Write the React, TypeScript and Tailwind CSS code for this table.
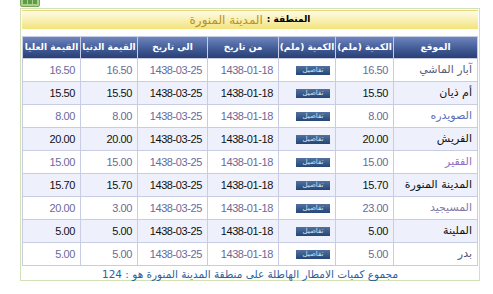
import React from "react";

interface RainRow {
  site: string;
  amount: string;
  from: string;
  to: string;
  min: string;
  max: string;
  siteColor: string;
}

const ROWS: RainRow[] = [
  { site: "آبار الماشي", amount: "16.50", from: "1438-01-18", to: "1438-03-25", min: "16.50", max: "16.50", siteColor: "text-[#5a5a7a]" },
  { site: "أم ذيان", amount: "15.50", from: "1438-01-18", to: "1438-03-25", min: "15.50", max: "15.50", siteColor: "text-[#111111]" },
  { site: "الصويدره", amount: "8.00", from: "1438-01-18", to: "1438-03-25", min: "8.00", max: "8.00", siteColor: "text-[#5b6fb5]" },
  { site: "الفريش", amount: "20.00", from: "1438-01-18", to: "1438-03-25", min: "20.00", max: "20.00", siteColor: "text-[#111111]" },
  { site: "الفقير", amount: "15.00", from: "1438-01-18", to: "1438-03-25", min: "15.00", max: "15.00", siteColor: "text-[#8f6fc0]" },
  { site: "المدينة المنورة", amount: "15.70", from: "1438-01-18", to: "1438-03-25", min: "15.70", max: "15.70", siteColor: "text-[#111111]" },
  { site: "المسيجيد", amount: "23.00", from: "1438-01-18", to: "1438-03-25", min: "3.00", max: "20.00", siteColor: "text-[#7f7aa8]" },
  { site: "الملينة", amount: "5.00", from: "1438-01-18", to: "1438-03-25", min: "5.00", max: "5.00", siteColor: "text-[#111111]" },
  { site: "بدر", amount: "5.00", from: "1438-01-18", to: "1438-03-25", min: "5.00", max: "5.00", siteColor: "text-[#505070]" },
];

const HEADERS = ["الموقع", "الكمية (ملم)", "الكمية (ملم)", "من تاريخ", "الى تاريخ", "القيمة الدنيا", "القيمة العليا"];
const WIDTHS = ["w-[84px]", "w-[58px]", "w-[57px]", "w-[71px]", "w-[70px]", "w-[57px]", "w-[58px]"];

// Tahoma-ish narrow digits
const num = "font-['Liberation_Sans',Arial,sans-serif] text-[11px] tracking-[-0.4px]";
const arabic = "font-['DejaVu_Sans',sans-serif]";

function DetailsButton() {
  return (
    <span className="inline-flex h-[9px] w-[34px] items-center justify-center bg-gradient-to-b from-[#52719f] to-[#254676] align-middle text-[7px] leading-none text-[#d6e2f2]">
      تفاصيل
    </span>
  );
}

export default function App() {
  return (
    <div className="relative h-[294px] w-[493px] overflow-hidden bg-white">
      <svg className="absolute left-[20px] top-[-6px]" width="20" height="13" viewBox="0 0 20 13">
        <rect x="0.5" y="0.5" width="19" height="12" rx="1.5" fill="#a9cf8c" stroke="#7aa65a" />
        <rect x="3" y="6" width="4" height="4" fill="#5f9a45" />
        <rect x="8" y="6" width="4" height="4" fill="#5f9a45" />
        <rect x="13" y="6" width="4" height="4" fill="#5f9a45" />
      </svg>

      <div className="ml-[20px] mt-[8px] h-[273px] w-[460px] border border-[#d3e2b6] p-[1px]" dir="rtl">
        <div className="flex h-[19px] items-center justify-center gap-[4px] border-t border-[#e6d97c] bg-gradient-to-b from-[#fffbe6] to-[#f3e37a]">
          <span className={`${arabic} text-[9px] font-bold text-black`}>المنطقة :</span>
          <span className={`${arabic} text-[12px] text-[#b8921e]`}>المدينة المنورة</span>
        </div>

        <table className="mt-[7px] w-[455px] table-fixed border-collapse border border-[#c7cce6]">
          <thead>
            <tr className="h-[22px] bg-gradient-to-b from-[#6f85bd] via-[#455e98] to-[#263d72]">
              {HEADERS.map((h, i) => (
                <th
                  key={i}
                  className={`${WIDTHS[i]} border-x border-[#c7cce6] p-0 text-center ${arabic} text-[9px] font-bold text-white`}
                >
                  {h}
                </th>
              ))}
            </tr>
          </thead>
          <tbody>
            {ROWS.map((r, i) => {
              const alt = i % 2 === 1;
              const txt = alt ? "text-[#111111]" : "text-[#6a6a98]";
              const cell = "border border-[#c9cde3] px-[5px] py-0 text-right align-middle";
              return (
                <tr key={r.site} className={`h-[23px] ${alt ? "bg-[#eef1fc]" : "bg-white"}`}>
                  <td className={`${cell} ${arabic} text-[11px] ${r.siteColor}`}>{r.site}</td>
                  <td className={`${cell} ${num} ${txt}`}>{r.amount}</td>
                  <td className={`${cell} ${arabic} leading-none`}>
                    <DetailsButton />
                  </td>
                  <td className={`${cell} ${num} ${txt}`}>{r.from}</td>
                  <td className={`${cell} ${num} ${txt}`}>{r.to}</td>
                  <td className={`${cell} ${num} ${txt}`}>{r.min}</td>
                  <td className={`${cell} ${num} ${txt}`}>{r.max}</td>
                </tr>
              );
            })}
          </tbody>
        </table>

        <p className={`mt-[1px] text-center ${arabic} text-[10.5px] leading-[14px] text-[#2d5f9c]`}>
          مجموع كميات الامطار الهاطلة على منطقة المدينة المنورة هو : 124
        </p>
      </div>
    </div>
  );
}
